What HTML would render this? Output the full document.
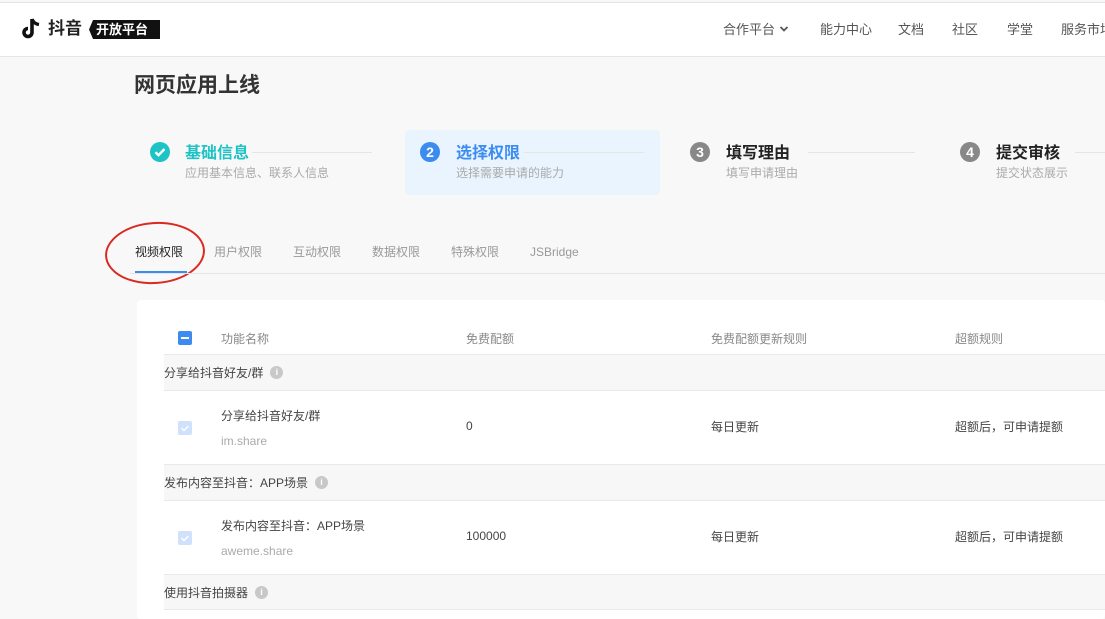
<!DOCTYPE html>
<html><head><meta charset="utf-8"><style>
*{margin:0;padding:0;box-sizing:border-box}
body{width:1105px;height:619px;overflow:hidden;background:#f8f8f8;font-family:"Liberation Sans","Noto Sans CJK SC",sans-serif;position:relative;color:#333}
.a{position:absolute;white-space:nowrap}
.hdr{position:absolute;left:0;top:2px;width:1105px;height:55px;background:#fff;border-top:1px solid #e4e4e4;border-bottom:1px solid #e6e6e6}
.nav{font-size:13px;color:#555;top:19px}
.st{font-size:16px;font-weight:bold;line-height:18px}
.sd{font-size:12px;color:#aaa;line-height:14px}
.circ{width:20px;height:20px;border-radius:50%;color:#fff;font-weight:bold;font-size:14px;text-align:center;line-height:20px}
.line{height:1px;background:#e5e5e5}
.tab{font-size:12px;color:#999;top:243px}
.card{position:absolute;left:137px;top:300px;width:968px;height:319px;background:#fff;border-radius:4px}
.th{font-size:12px;color:#888;top:330px}
.grp{position:absolute;left:164px;width:941px;height:37px;background:#f7f7f7;border-top:1px solid #e9e9e9;border-bottom:1px solid #e9e9e9}
.gt{font-size:12px;color:#444}
.info{display:inline-block;width:13px;height:13px;border-radius:50%;background:#c8c8c8;color:#fff;font-size:9px;text-align:center;line-height:13px;margin-left:7px;vertical-align:middle;font-weight:bold;position:relative;top:-1px}
.cell{font-size:12px;color:#444}
.sub{font-size:12px;color:#aaa}
</style></head><body>
<div class="hdr"></div>
<svg class="a" style="left:22px;top:17px" width="20" height="24" viewBox="0 0 20 24"><path d="M10 2v13.5a4 4 0 1 1-4-4" fill="none" stroke="#111" stroke-width="3.6"/><path d="M10 2c1 3 3 5 7 5.5" fill="none" stroke="#111" stroke-width="3.4"/></svg>
<div class="a" style="left:48px;top:17px;font-size:17px;font-weight:bold;color:#222;line-height:24px">抖音</div>
<div class="a" style="left:89px;top:20px;width:71px;height:19px;background:#111;color:#fff;font-size:13px;font-weight:bold;line-height:19px;padding-left:7px;clip-path:polygon(4px 0,100% 0,100% 100%,4px 100%,0 50%)">开放平台</div>
<div class="a nav" style="left:723px">合作平台 <svg width="10" height="8" viewBox="0 0 10 8" style="vertical-align:1px"><path d="M1.5 2l3.5 3.5 3.5-3.5" fill="none" stroke="#555" stroke-width="1.8"/></svg></div>
<div class="a nav" style="left:820px">能力中心</div>
<div class="a nav" style="left:898px">文档</div>
<div class="a nav" style="left:952px">社区</div>
<div class="a nav" style="left:1007px">学堂</div>
<div class="a nav" style="left:1061px">服务市场</div>
<div class="a" style="left:134px;top:72px;font-size:21px;font-weight:bold;color:#333;line-height:28px">网页应用上线</div>
<div class="a" style="left:405px;top:130px;width:255px;height:65px;background:#e9f4fe;border-radius:4px"></div>
<svg class="a" style="left:150px;top:142px" width="20" height="20" viewBox="0 0 20 20"><circle cx="10" cy="10" r="10" fill="#1ec3c6"/><path d="M5.5 10.2l3 3 6-6.2" fill="none" stroke="#fff" stroke-width="2.4"/></svg>
<div class="a st" style="left:185px;top:145px;color:#1ec3c6">基础信息</div>
<div class="line a" style="left:252px;top:152px;width:120px"></div>
<div class="a sd" style="left:185px;top:166px">应用基本信息、联系人信息</div>
<div class="a circ" style="left:420px;top:142px;background:#3c8cf0">2</div>
<div class="a st" style="left:456px;top:145px;color:#3c8cf0">选择权限</div>
<div class="line a" style="left:524px;top:152px;width:120px"></div>
<div class="a sd" style="left:456px;top:166px">选择需要申请的能力</div>
<div class="a circ" style="left:690px;top:142px;background:#888">3</div>
<div class="a st" style="left:726px;top:145px;color:#222">填写理由</div>
<div class="line a" style="left:808px;top:152px;width:107px"></div>
<div class="a sd" style="left:726px;top:166px">填写申请理由</div>
<div class="a circ" style="left:960px;top:142px;background:#888">4</div>
<div class="a st" style="left:996px;top:145px;color:#222">提交审核</div>
<div class="line a" style="left:1075px;top:152px;width:30px"></div>
<div class="a sd" style="left:996px;top:166px">提交状态展示</div>
<div class="a tab" style="left:135px;color:#222">视频权限</div>
<div class="a" style="left:135px;top:271px;width:52px;height:2px;background:#3c8cf0"></div>
<div class="a" style="left:105px;top:222px;width:100px;height:62px;border:2px solid #d92a22;border-radius:50%;transform:rotate(-4deg)"></div>
<div class="a tab" style="left:214px">用户权限</div>
<div class="a tab" style="left:293px">互动权限</div>
<div class="a tab" style="left:372px">数据权限</div>
<div class="a tab" style="left:451px">特殊权限</div>
<div class="a tab" style="left:530px;top:245px">JSBridge</div>
<div class="a line" style="left:130px;top:273px;width:975px"></div>
<div class="card"></div>
<div class="a" style="left:178px;top:331px;width:14px;height:14px;background:#3c8cf0;border-radius:2px"><div style="margin:6px 3px;width:8px;height:2px;background:#fff"></div></div>
<div class="a th" style="left:221px">功能名称</div>
<div class="a th" style="left:466px">免费配额</div>
<div class="a th" style="left:711px">免费配额更新规则</div>
<div class="a th" style="left:955px">超额规则</div>
<div class="grp" style="top:354px"><div class="a gt" style="left:0;top:9px">分享给抖音好友/群<span class="info">i</span></div></div>
<svg class="a" style="left:178px;top:421px" width="14" height="14"><rect width="14" height="14" rx="2" fill="#cfe1fb"/><path d="M3.5 7l2.5 2.5 4.5-4.5" fill="none" stroke="#fff" stroke-width="1.5"/></svg>
<div class="a cell" style="left:221px;top:407px">分享给抖音好友/群</div>
<div class="a sub" style="left:221px;top:434px">im.share</div>
<div class="a cell" style="left:466px;top:419px">0</div>
<div class="a cell" style="left:711px;top:418px">每日更新</div>
<div class="a cell" style="left:955px;top:418px">超额后，可申请提额</div>
<div class="grp" style="top:464px"><div class="a gt" style="left:0;top:9px">发布内容至抖音：APP场景<span class="info">i</span></div></div>
<svg class="a" style="left:178px;top:531px" width="14" height="14"><rect width="14" height="14" rx="2" fill="#cfe1fb"/><path d="M3.5 7l2.5 2.5 4.5-4.5" fill="none" stroke="#fff" stroke-width="1.5"/></svg>
<div class="a cell" style="left:221px;top:517px">发布内容至抖音：APP场景</div>
<div class="a sub" style="left:221px;top:544px">aweme.share</div>
<div class="a cell" style="left:466px;top:529px">100000</div>
<div class="a cell" style="left:711px;top:528px">每日更新</div>
<div class="a cell" style="left:955px;top:528px">超额后，可申请提额</div>
<div class="grp" style="top:574px;height:36px"><div class="a gt" style="left:0;top:9px">使用抖音拍摄器<span class="info">i</span></div></div>
</body></html>
